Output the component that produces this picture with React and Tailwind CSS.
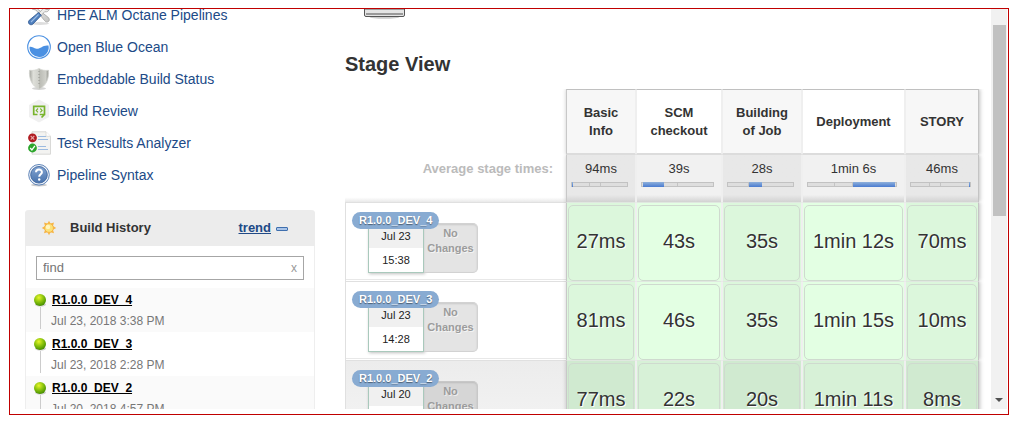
import React from 'react';
import clsx from 'clsx';

function ToolsIcon() {
  return (
    <svg viewBox="0 0 24 24" className="size-6">
      <defs>
        <linearGradient id="steel" x1="0" y1="0" x2="1" y2="1">
          <stop offset="0" stopColor="#fafafa" />
          <stop offset="1" stopColor="#c2c2c0" />
        </linearGradient>
      </defs>
      <ellipse cx="13" cy="20.500" rx="9" ry="1.500" fill="#ddd" />
      <path d="M3 3l2 3 4 1 8.500 10.500c1 1.500 3 2 4.200.8s.5-3.200-.8-4.200L10.500 6 9.500 2.500 6 0l.5 3.500L5 4.500z" fill="url(#steel)" stroke="#a2a2a0" strokeWidth=".8" />
      <path d="M17.500 1.500c-2 1-3 3-2.200 5l-3.500 3.700 2.200 2.300 3.700-3.800c2.300.6 4.300-.7 4.800-3l-2.500 1-2-.9-.6-2z" fill="#ececea" stroke="#a2a2a0" strokeWidth=".8" />
      <path d="M11.500 9.500l2.800 2.800-8.300 8.700c-1 1-2.800 1-3.800 0s-1-2.700 0-3.700z" fill="#4f7fbd" stroke="#2f5790" strokeWidth=".8" />
      <path d="M11.500 11.500l-7.500 7.500" stroke="#9dbde6" strokeWidth="1.100" />
    </svg>
  );
}

function OceanIcon() {
  return (
    <svg viewBox="0 0 24 24" className="size-6">
      <circle cx="12" cy="12" r="11.300" fill="#fff" stroke="#4a90e2" strokeWidth="1.100" />
      <path d="M2.500 12C5 11.300 6.500 13.500 9.500 13.800 14 14 15.500 9.700 21.500 10.500A9.600 9.600 0 1 1 2.500 12z" fill="#4a90e2" />
    </svg>
  );
}

function ShieldIcon() {
  return (
    <svg viewBox="0 0 24 24" className="size-6">
      <defs>
        <linearGradient id="shield" x1="0" x2="1">
          <stop offset="0" stopColor="#a2a39d" />
          <stop offset=".2" stopColor="#dfe0da" />
          <stop offset=".49" stopColor="#cfd0ca" />
          <stop offset=".52" stopColor="#babbb4" />
          <stop offset=".85" stopColor="#cfd0ca" />
          <stop offset="1" stopColor="#92938d" />
        </linearGradient>
      </defs>
      <ellipse cx="12" cy="21.500" rx="7" ry="1.500" fill="#d5d5d5" />
      <path d="M12 1.500c3 1.800 6 2.200 9.500 1.800C22.200 12 19 19 12 22.300 5 19 1.800 12 2.500 3.300 6 3.700 9 3.300 12 1.500z" fill="url(#shield)" stroke="#d2d3ce" strokeWidth=".8" />
      <path d="M12 4v15" stroke="#93948e" strokeWidth="1" strokeDasharray="1 2" />
    </svg>
  );
}

function ReviewIcon() {
  return (
    <svg viewBox="0 0 24 24" className="size-6">
      <path d="M12 .5l10 5.500v12L12 23.500 2 18V6z" fill="#f0f0f0" />
      <path d="M10.500 15.500H6.700V7.300h10.800v8.200h-4.800M17.500 15.500l-3 3" fill="none" stroke="#78b42c" strokeWidth="1.700" />
      <path d="M11 9.500L9.200 11.400l1.800 1.900M13.300 9.500l1.800 1.900-1.800 1.900" fill="none" stroke="#78b42c" strokeWidth="1.100" />
    </svg>
  );
}

function ResultsIcon() {
  return (
    <svg viewBox="0 0 24 24" className="size-6">
      <path d="M5 .8h14l4.500 4.500v17.900H5z" fill="#f3f3f1" stroke="#d5d5d2" strokeWidth=".9" />
      <path d="M19 .8v4.500h4.500" fill="#fff" stroke="#d5d5d2" strokeWidth=".8" />
      <path d="M11 5.500h8M11 8.500h10M11 15.500h8M11 18.500h10" stroke="#9cbbe0" strokeWidth="1" />
      <circle cx="5.500" cy="6.800" r="4.400" fill="#b01c22" />
      <path d="M3.700 5l3.600 3.600M7.300 5L3.700 8.600" stroke="#e8a8a8" strokeWidth="1.100" />
      <circle cx="5.500" cy="17" r="4.400" fill="#2ba52b" />
      <path d="M3.200 17l1.700 1.900 3-4" fill="none" stroke="#fff" strokeWidth="1.300" />
    </svg>
  );
}

function HelpIcon() {
  return (
    <svg viewBox="0 0 24 24" className="size-6">
      <defs>
        <linearGradient id="help" x1="0" x2="0" y1="0" y2="1">
          <stop offset="0" stopColor="#84a5d2" />
          <stop offset="1" stopColor="#4872ac" />
        </linearGradient>
      </defs>
      <ellipse cx="12" cy="22" rx="8" ry="1.500" fill="#ccc" />
      <circle cx="12" cy="11.800" r="10.300" fill="#f4f7fb" stroke="#5d83b8" strokeWidth="1" />
      <circle cx="12" cy="11.800" r="8.300" fill="url(#help)" stroke="#3d659e" strokeWidth=".9" />
      <path d="M9 9.200c.2-3.600 6-3.300 5.900 0 0 2-2.700 2.100-2.700 4.600" fill="none" stroke="#fff" strokeWidth="2" />
      <circle cx="12.200" cy="16.500" r="1.200" fill="#fff" />
    </svg>
  );
}

function SunIcon() {
  return (
    <svg viewBox="0 0 16 16" className="size-4">
      <path
        d="M8 .8l1.500 2.700 3.500-1-1 3.500L15.200 8 12 9.700l1 3.500-3.500-1L8 15.200l-1.500-3-3.500 1 1-3.500L.8 8 4 6 3 2.500l3.500 1z"
        fill="#f7b545"
      />
      <circle cx="8" cy="8" r="4.400" fill="#fbe27a" stroke="#f5b040" strokeWidth=".8" />
      <circle cx="7" cy="7" r="2.200" fill="#fff5c0" />
    </svg>
  );
}

function BallIcon() {
  return (
    <svg viewBox="0 0 14 14" className="size-[14px]">
      <defs>
        <radialGradient id="ball" cx=".4" cy=".3" r=".7">
          <stop offset="0" stopColor="#e8f52a" />
          <stop offset=".5" stopColor="#8fc60e" />
          <stop offset="1" stopColor="#468f00" />
        </radialGradient>
      </defs>
      <ellipse cx="7.500" cy="11.500" rx="5.500" ry="2" fill="#cfcfcf" />
      <circle cx="7" cy="7" r="6" fill="url(#ball)" />
    </svg>
  );
}

const tasks = [
  ['HPE ALM Octane Pipelines', ToolsIcon],
  ['Open Blue Ocean', OceanIcon],
  ['Embeddable Build Status', ShieldIcon],
  ['Build Review', ReviewIcon],
  ['Test Results Analyzer', ResultsIcon],
  ['Pipeline Syntax', HelpIcon],
];

const history = [
  ['R1.0.0_DEV_4', 'Jul 23, 2018 3:38 PM'],
  ['R1.0.0_DEV_3', 'Jul 23, 2018 2:28 PM'],
  ['R1.0.0_DEV_2', 'Jul 20, 2018 4:57 PM'],
];

// Index of the segment that is filled in each stage's share bar.
const stages = [
  { name: 'Basic Info', avg: '94ms', active: 0, width: 'w-[70px]' },
  { name: 'SCM checkout', avg: '39s', active: 1, width: 'w-[86px]' },
  { name: 'Building of Job', avg: '28s', active: 2, width: 'w-20' },
  { name: 'Deployment', avg: '1min 6s', active: 3, width: 'w-[103px]' },
  { name: 'STORY', avg: '46ms', active: 4, width: 'w-[74px]' },
];

const segments = ['w-px', 'w-[30%]', 'w-[20%]', 'flex-1', 'w-px'];

const runs = [
  { name: 'R1.0.0_DEV_4', day: 'Jul 23', time: '15:38', times: ['27ms', '43s', '35s', '1min 12s', '70ms'] },
  { name: 'R1.0.0_DEV_3', day: 'Jul 23', time: '14:28', times: ['81ms', '46s', '35s', '1min 15s', '10ms'] },
  { name: 'R1.0.0_DEV_2', day: 'Jul 20', time: '16:57', dim: true, times: ['77ms', '22s', '20s', '1min 11s', '8ms'] },
];

function edge(i) {
  return clsx(
    i === 0
      ? 'border-l border-l-[#c8c8c8] shadow-[0_0_4px_rgba(0,0,0,0.2)] [clip-path:inset(0_0_0_-6px)]'
      : 'border-l border-l-[#efefef]',
    i === 4
      ? 'border-r border-r-[#c4c4c4] shadow-[1px_0_4px_rgba(0,0,0,0.25)] [clip-path:inset(0_-8px_0_0)]'
      : 'border-r border-r-[#efefef]',
  );
}

function ShareBar({ active }) {
  return (
    <div className="mt-1 mr-[7px] ml-1 flex h-[5px] border border-[#c2c2c2] bg-[#dedede]">
      {segments.map((w, i) => (
        <div
          key={i}
          className={clsx(
            w,
            i === active && 'z-10 -my-px bg-linear-to-b from-[#8fb0da] to-[#4a7bd0]',
            i !== active && i > 0 && i < 3 && 'border-r border-[#c4c4c4]',
          )}
        />
      ))}
    </div>
  );
}

function Sidebar() {
  return (
    <aside className="w-[305px] shrink-0 pl-[15px]">
      <nav className="-mt-[10px]">
        {tasks.map(([label, Icon]) => (
          <a key={label} href="#" className="flex h-8 items-center gap-[6px] pl-[2px] text-sm text-[#204a87]">
            <Icon />
            {label}
          </a>
        ))}
      </nav>
      <section className="mt-[19px] w-[290px] rounded-t border-x border-[#eee]">
        <header className="-mx-px flex h-9 items-center rounded-t bg-[#ececec] pr-[27px] pl-4 text-[13px] font-bold text-[#333]">
          <SunIcon />
          <h2 className="ml-[13px] flex-1">Build History</h2>
          <a href="#" className="text-[#204a87] underline">trend</a>
          <button aria-label="Collapse" className="mt-[2px] ml-[5px] h-1 w-3 rounded-[1px] border border-[#3f6fae] bg-[#a9c4e8]" />
        </header>
        <div className="mx-[10px] my-[10px] flex h-6 items-center border border-[#a6a6a6] px-[6px]">
          <input aria-label="find" placeholder="find" className="min-w-0 flex-1 text-[13px] outline-none placeholder:text-[#757575]" />
          <button aria-label="Clear" className="text-xs text-[#999]">x</button>
        </div>
        <ul className="-mt-[2px]">
          {history.map(([name, date], i) => (
            <li key={name} className={clsx('flex h-11 gap-1 pt-[5px] pl-[7px]', i % 2 === 0 && 'bg-[#fafafa]')}>
              <div className="flex flex-col items-center">
                <BallIcon />
                <div className="h-[22px] w-px bg-[#ccc]" />
              </div>
              <div className="text-xs leading-[14px]">
                <a href="#" className="ml-[1px] font-bold text-black underline">{name}</a>
                <div className="mt-[7px] text-[#777]">{date}</div>
              </div>
            </li>
          ))}
        </ul>
      </section>
    </aside>
  );
}

function RunLabel({ run }) {
  return (
    <div className="relative flex items-start pt-[18px] pl-[22px] text-[11px]">
      <div className="w-14 border border-[#a9c9bc] bg-white text-center text-[#222] shadow-[1px_1px_3px_rgba(0,0,0,0.25)]">
        <div className="bg-[#f0f0f0] pt-[3px] leading-[23px]">{run.day}</div>
        <div className="leading-6">{run.time}</div>
      </div>
      <div className={clsx(
        'mt-[2px] h-[50px] w-[54px] rounded-r-[5px] border border-l-0 pt-[2px] text-center leading-[15px] font-bold text-[#9c9c9c] shadow-[inset_0_1px_2px_rgba(0,0,0,0.12)] [text-shadow:1px_1px_0_rgba(255,255,255,0.6)]',
        run.dim ? 'border-[#c8c8c8] bg-[#d6d6d6]' : 'border-[#d2d2d2] bg-[#e4e4e4]',
      )}>
        No Changes
      </div>
      <span className="absolute top-[9px] left-[6px] flex h-[17px] items-center rounded-full bg-[#88abd2] px-[7px] font-bold text-white [text-shadow:0_1px_1px_rgba(0,0,0,0.45)]">
        {run.name}
      </span>
    </div>
  );
}

function StageTable() {
  return (
    <table className="mt-[11px] table-fixed border-separate border-spacing-0 text-[#333]">
      <colgroup>
        <col className="w-[221px]" />
        {stages.map((s) => <col key={s.name} className={s.width} />)}
      </colgroup>
      <thead>
        <tr className="h-[66px] text-[13px] leading-[18px]">
          <td />
          {stages.map((s, i) => (
            <th
              key={s.name}
              scope="col"
              className={clsx('border-t border-b-2 border-t-[#c0c0c0] border-b-[#dcdcdc] px-2', i % 2 ? 'bg-white' : 'bg-[#f7f7f7]', edge(i))}
            >
              {s.name}
            </th>
          ))}
        </tr>
        <tr className="h-[47px] text-[13px] leading-[18px]">
          <th scope="row" className="bg-linear-to-t from-[#e9e9e9] to-white to-10% pt-[5px] pr-[13px] text-right align-top text-[#bbb]">
            Average stage times:
          </th>
          {stages.map((s, i) => (
            <td
              key={s.name}
              className={clsx('bg-linear-to-t from-[#d2d2d2] to-15% pt-[5px] align-top text-center', i % 2 ? 'to-[#f1f1f1]' : 'to-[#e8e8e8]', edge(i))}
            >
              {s.avg}
              <ShareBar active={s.active} />
            </td>
          ))}
        </tr>
      </thead>
      <tbody>
        {runs.map((run) => (
          <tr key={run.name} className="h-[79px]">
            <th
              scope="row"
              className={clsx(
                'border-t border-l border-[#e0e0e0] text-left align-top font-normal shadow-[inset_0_-1px_0_#fff,inset_0_-2px_0_#e8e8e8]',
                run.dim && 'bg-linear-to-b from-[#ececec] to-[#f4f4f4]',
              )}
            >
              <RunLabel run={run} />
            </th>
            {run.times.map((t, i) => {
              const tone = run.dim
                ? i % 2 ? 'bg-[#d7f1d7]' : 'bg-[#d0ead0]'
                : i % 2 ? 'bg-[#e3ffe3]' : 'bg-[#dcf7dc]';
              return (
                <td key={i} className={clsx('border-t border-t-[#e0e8e0] px-px pt-[2px] text-center text-xl', tone, edge(i))}>
                  <div className="flex h-[76px] items-center justify-center rounded-[5px] border border-[#cfdacf] pb-1 whitespace-nowrap [text-shadow:1px_1px_0_#fff]">
                    {t}
                  </div>
                </td>
              );
            })}
          </tr>
        ))}
      </tbody>
    </table>
  );
}

export default function App() {
  return (
    <div className="h-screen bg-white pt-2 pr-[17px] pb-[14px] pl-[9px] font-['Liberation_Sans',Arial,sans-serif]">
      <div className="h-full border border-[#c00000] pr-px pb-[5px]">
        <div className="flex h-full overflow-hidden">
          <Sidebar />
          <main className="min-w-0 flex-1 overflow-hidden pl-[30px]">
            <svg viewBox="0 0 43 10" className="ml-[18px] h-[10px] w-[43px]">
              <ellipse cx="21.500" cy="8" rx="15" ry="1.800" fill="#ccc" />
              <path d="M1.500 0v6q0 1.500 1.500 1.500h37q1.500 0 1.500-1.500V0z" fill="#e4e4e4" stroke="#555" />
              <path d="M3 5h37" stroke="#999" strokeWidth="2" />
            </svg>
            <h1 className="mt-[31px] text-xl leading-7 font-bold text-[#333]">Stage View</h1>
            <StageTable />
          </main>
          <div className="flex w-4 shrink-0 flex-col items-center bg-[#f1f1f1] pt-4">
            <div className="h-[191px] w-[13px] bg-[#c1c1c1]" />
            <svg viewBox="0 0 8 4" className="mt-auto mb-[7px] h-1 w-2">
              <path d="M0 0h8L4 4z" fill="#505050" />
            </svg>
          </div>
        </div>
      </div>
    </div>
  );
}
